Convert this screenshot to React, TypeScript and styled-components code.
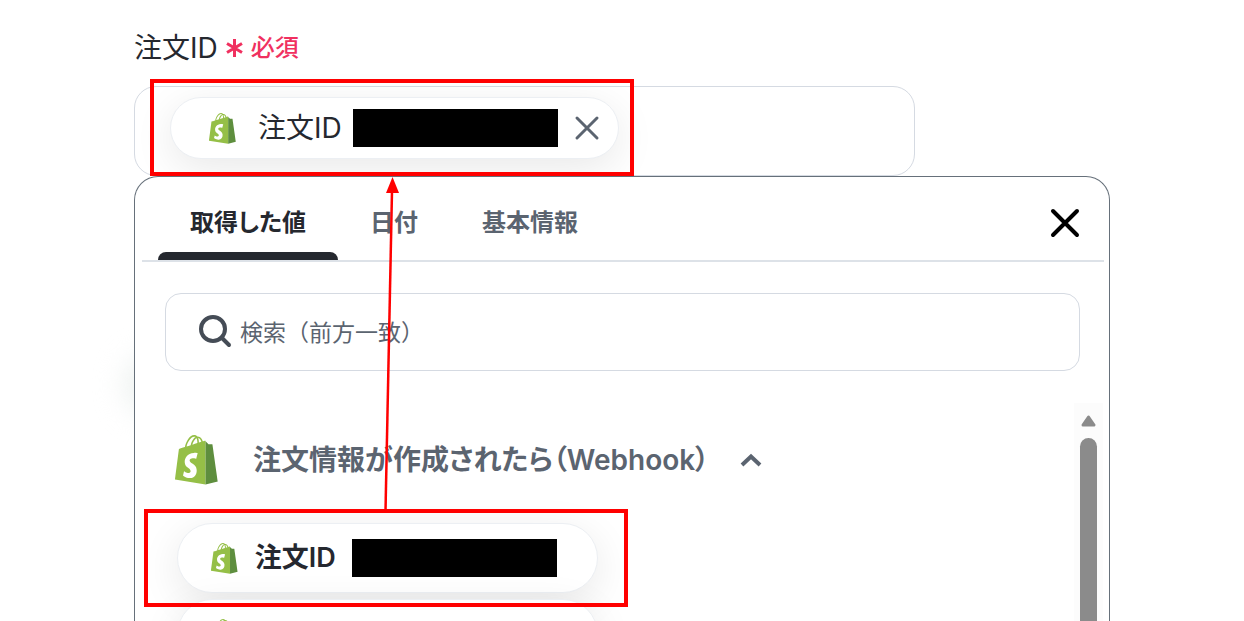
import React from "react";
import styled, { createGlobalStyle } from "styled-components";

const GlobalStyle = createGlobalStyle`
  *, *::before, *::after { box-sizing: border-box; }
  body {
    margin: 0;
    background: #fff;
    color: #25282f;
    font-family: Inter, "Noto Sans CJK JP", sans-serif;
    font-size: 28px;
    line-height: 32px;
  }
  button, input { font: inherit; color: inherit; }
`;

const Page = styled.main`
  position: relative;
  display: flex;
  flex-direction: column;
  height: 100vh;
  overflow: hidden;
  padding: 32px 134px 0;
`;

const FieldLabel = styled.div`
  display: flex;
  align-items: center;
  gap: 8px;
  height: 32px;
  margin-bottom: 22px;
`;

const Required = styled.span`
  display: flex;
  align-items: center;
  gap: 8px;
  color: #f0305f;
  font-size: 24px;
  font-weight: 500;
`;

const ValueField = styled.div`
  display: flex;
  align-items: center;
  width: 80%;
  height: 90px;
  padding: 0 35px 6px;
  border: 1px solid #d5dae2;
  border-radius: 22px;
`;

const Chip = styled.div<{ $large?: boolean }>`
  position: relative;
  display: flex;
  align-items: center;
  width: ${(p) => (p.$large ? "421px" : "449px")};
  height: ${(p) => (p.$large ? "70px" : "62px")};
  padding: 0 ${(p) => (p.$large ? "40px 0 33px" : "18px 0 38px")};
  flex-shrink: 0;
  border: 1px solid #eceff3;
  border-radius: 35px;
  background: #fff;
  box-shadow: 0 10px 40px rgba(0, 0, 0, 0.09);
`;

const ChipText = styled.span<{ $large?: boolean }>`
  width: ${(p) => (p.$large ? "98px" : "95px")};
  margin-left: ${(p) => (p.$large ? "17px" : "22px")};
  font-size: ${(p) => (p.$large ? "27px" : "28px")};
  font-weight: ${(p) => (p.$large ? 600 : 400)};
  white-space: nowrap;
`;

const Redacted = styled.span`
  width: 205px;
  height: 38px;
  flex-shrink: 0;
  background: #000;
`;

const IconButton = styled.button`
  display: flex;
  align-items: center;
  justify-content: center;
  margin-left: auto;
  padding: 0;
  border: 0;
  background: none;
  cursor: pointer;
`;

const Frame = styled.span<{ $inset: string }>`
  position: absolute;
  z-index: 2;
  inset: ${(p) => p.$inset};
  border: 4px solid #f00;
  pointer-events: none;
`;

const Glow = styled.div`
  position: absolute;
  left: 124px;
  top: 355px;
  width: 60px;
  height: 60px;
  border-radius: 30px;
  background: #eef2f0;
  filter: blur(14px);
`;

const Panel = styled.section`
  position: relative;
  display: flex;
  flex: 1;
  flex-direction: column;
  min-height: 0;
  border: 1px solid #66707a;
  border-bottom: 0;
  border-radius: 24px 24px 0 0;
  background: #fff;
`;

const PanelHead = styled.header`
  display: flex;
  align-items: center;
  height: 85px;
  margin: 0 5px 0 7px;
  padding: 0 24px 0 16px;
  border-bottom: 2px solid #dde2e8;
`;

const CloseButton = styled(IconButton)`
  padding-top: 8px;
`;

const Tab = styled.button<{ $active?: boolean }>`
  position: relative;
  align-self: stretch;
  padding: 8px 32px 0;
  border: 0;
  background: none;
  color: ${(p) => (p.$active ? "#25282f" : "#5b6470")};
  font-size: 24px;
  font-weight: 600;
  font-feature-settings: "palt";
  cursor: pointer;

  &::after {
    content: "";
    display: ${(p) => (p.$active ? "block" : "none")};
    position: absolute;
    inset: auto 0 0;
    height: 8px;
    border-radius: 8px 8px 0 0;
    background: #25282f;
  }
`;

const SearchBox = styled.label`
  display: flex;
  align-items: center;
  gap: 8px;
  height: 78px;
  margin: 31px 29px 32px 30px;
  padding: 0 33px;
  flex-shrink: 0;
  border: 1px solid #d5dae2;
  border-radius: 16px;
`;

const SearchInput = styled.input`
  flex: 1;
  min-width: 0;
  padding: 2px 0 0;
  border: 0;
  outline: 0;
  background: none;
  font-size: 23px;

  &::placeholder { color: #5b6470; opacity: 1; }
`;

const ListArea = styled.div`
  display: flex;
  flex: 1;
  justify-content: space-between;
  min-height: 0;
  padding: 0 6px 0 40px;
`;

const List = styled.div`
  display: flex;
  flex-direction: column;
  flex: 1;
  padding-top: 25px;
`;

const Group = styled.button`
  display: flex;
  align-items: center;
  height: 64px;
  padding: 0;
  flex-shrink: 0;
  border: 0;
  background: none;
  color: #5b6470;
  font-weight: 600;
  cursor: pointer;
`;

const GroupName = styled.span`
  margin: 0 31px 0 35px;
  white-space: nowrap;
  font-feature-settings: "palt";
`;

const Items = styled.div`
  display: flex;
  flex-direction: column;
  gap: 6px;
  padding: 31px 0 0 2px;
`;

const Scrollbar = styled.div`
  display: flex;
  flex-direction: column;
  align-items: center;
  width: 29px;
  padding-top: 12px;
  background: #fcfcfc;
`;

const Thumb = styled.div`
  flex: 1;
  width: 17px;
  margin-top: 11px;
  border-radius: 9px 9px 0 0;
  background: #8b8b8b;
`;

const Arrow = styled.svg`
  position: absolute;
  z-index: 3;
  left: 240px;
  top: 0;
  pointer-events: none;
`;

const ShopifyBag = ({ width, height }: { width: number; height: number }) => (
  <svg width={width} height={height} viewBox="0 0 110 125" preserveAspectRatio="none" aria-hidden="true">
    <path
      fill="#95bf47"
      fillRule="evenodd"
      d="M74.7 14.8s-1.4.4-3.7 1.1c-.4-1.3-1-2.8-1.8-4.4-2.6-5-6.5-7.7-11.1-7.7-.3 0-.6 0-1 .1-.1-.2-.3-.3-.4-.5-2-2.2-4.6-3.2-7.7-3.1-6 .2-12 4.5-16.8 12.2-3.4 5.4-6 12.2-6.8 17.5-6.9 2.1-11.7 3.6-11.8 3.7-3.5 1.1-3.6 1.2-4 4.5C9.3 40.7 0 111.4 0 111.4l78.1 12.5V14.6c-1.5-.2-2.6-.1-3.4.2zM57.2 20.2c-4 1.2-8.4 2.6-12.7 3.9 1.2-4.7 3.6-9.4 6.4-12.5 1.1-1.1 2.6-2.4 4.3-3.2 1.7 3.6 2.1 8.500 2 11.800zM49.1 4.300c1.400 0 2.600.3 3.600.9-1.600.8-3.200 2.100-4.700 3.600-3.800 4.100-6.700 10.500-7.900 16.600-3.600 1.100-7.200 2.200-10.500 3.200C31.700 19.100 39.800 4.600 49.100 4.300zM61.200 18.900c0-3.100-.4-7.500-1.900-11.100 4.700.9 7 6.200 8 9.200z"
    />
    <path
      fill="#5e8e3e"
      d="M78.1 123.9l31.4-7.8S96 24.8 95.9 24.2c-.1-.6-.6-1-1.1-1s-9.3-.2-9.3-.2-5.4-5.2-7.4-7.2z"
    />
    <path
      fill="#fff"
      d="M57.9 45.7l-3.8 14.2s-4.2-1.9-9.2-1.6c-7.4.5-7.4 5.1-7.4 6.3.4 6.3 17.1 7.7 18 22.7.7 11.8-6.2 19.8-16.3 20.4-12 .7-18.7-6.4-18.7-6.4l2.6-10.9s6.7 5.1 12.1 4.7c3.5-.2 4.8-3.1 4.7-5.1-.5-8.3-14.1-7.8-15-21.4-.8-11.4 6.7-22.9 23.3-23.9 6.3-.5 9.7 1 9.7 1z"
    />
  </svg>
);

const Cross = ({ size, color, stroke }: { size: number; color: string; stroke: number }) => (
  <svg width={size} height={size} viewBox={`0 0 ${size} ${size}`} aria-hidden="true">
    <path
      d={`M3 3L${size - 3} ${size - 3}M${size - 3} 3L3 ${size - 3}`}
      stroke={color}
      strokeWidth={stroke}
      strokeLinecap="round"
    />
  </svg>
);

export default function App() {
  return (
    <>
      <GlobalStyle />
      <Page>
        <Glow />
        <FieldLabel>
          <span>注文ID</span>
          <Required>
            <svg width="17" height="20" viewBox="0 0 17 20" aria-hidden="true">
              <path
                d="M8.500 1V19M1 5.500L16 14.500M16 5.500L1 14.500"
                stroke="#f0305f"
                strokeWidth="3"
              />
            </svg>
            必須
          </Required>
        </FieldLabel>
        <ValueField>
          <Chip>
            <ShopifyBag width={27} height={31} />
            <ChipText>注文ID</ChipText>
            <Redacted />
            <IconButton type="button" aria-label="削除">
              <Cross size={26} color="#5b6470" stroke={3} />
            </IconButton>
            <Frame $inset="-19px -16px -18px -21px" />
          </Chip>
        </ValueField>
        <Panel>
          <PanelHead>
            <Tab type="button" $active>取得した値</Tab>
            <Tab type="button">日付</Tab>
            <Tab type="button">基本情報</Tab>
            <CloseButton type="button" aria-label="閉じる">
              <Cross size={30} color="#000" stroke={4} />
            </CloseButton>
          </PanelHead>
          <SearchBox>
            <svg width="33" height="34" viewBox="0 0 33 34" fill="none" stroke="#454c56" aria-hidden="true">
              <circle cx="14" cy="14" r="12" strokeWidth="4" />
              <path d="M22.500 22.500L30 30" strokeWidth="4" strokeLinecap="round" />
            </svg>
            <SearchInput type="text" aria-label="検索" placeholder="検索（前方一致）" />
          </SearchBox>
          <ListArea>
            <List>
              <Group type="button" aria-expanded="true">
                <ShopifyBag width={43} height={50} />
                <GroupName>注文情報が作成されたら（Webhook）</GroupName>
                <svg width="22" height="14" viewBox="0 0 22 14" fill="none" aria-hidden="true">
                  <path d="M2 12L11 3.500L20 12" stroke="#5b6470" strokeWidth="4" />
                </svg>
              </Group>
              <Items>
                <Chip $large>
                  <ShopifyBag width={27} height={31} />
                  <ChipText $large>注文ID</ChipText>
                  <Redacted />
                  <Frame $inset="-15px -31px -15px -34px" />
                </Chip>
                <Chip $large>
                  <ShopifyBag width={27} height={31} />
                </Chip>
              </Items>
            </List>
            <Scrollbar aria-hidden="true">
              <svg width="15" height="12" viewBox="0 0 15 12">
                <path d="M7.500 2L13 10H2z" fill="#8b8b8b" stroke="#8b8b8b" strokeWidth="3" strokeLinejoin="round" />
              </svg>
              <Thumb />
            </Scrollbar>
          </ListArea>
          <Arrow width="30" height="336" viewBox="0 0 30 336" aria-hidden="true">
            <path d="M10.500 334L17 14" stroke="#f00" strokeWidth="2.500" />
            <path d="M17.500 0L24 16H11z" fill="#f00" />
          </Arrow>
        </Panel>
      </Page>
    </>
  );
}
